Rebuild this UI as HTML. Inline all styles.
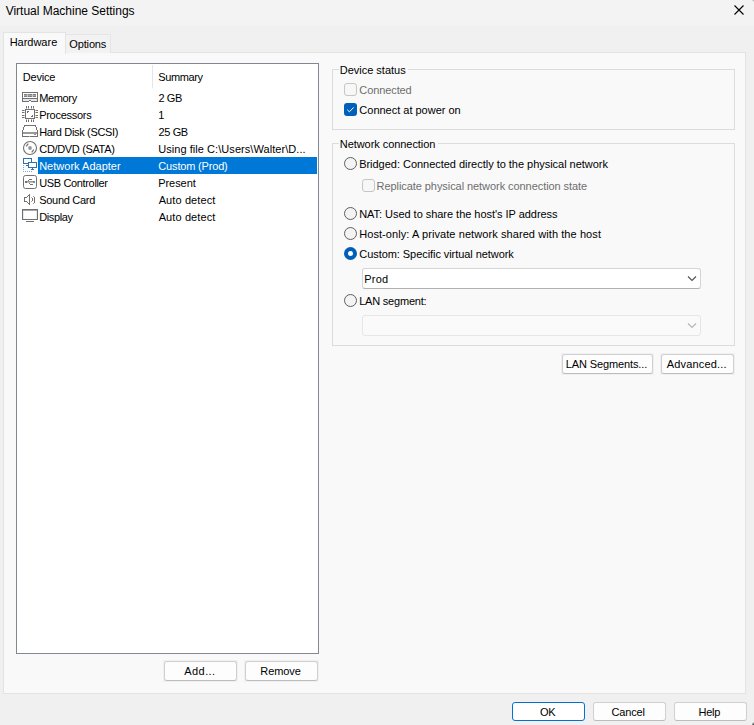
<!DOCTYPE html>
<html><head><meta charset="utf-8"><style>
html,body{margin:0;padding:0;}
body{width:754px;height:725px;overflow:hidden;position:relative;background:#f0f0f0;font-family:"Liberation Sans",sans-serif;font-size:11px;color:#000;}
.a{position:absolute;}
.t{position:absolute;white-space:pre;line-height:13px;height:13px;}
.btn{position:absolute;box-sizing:border-box;background:#fdfdfd;border:1px solid #d0d0d0;border-bottom-color:#bcbcbc;border-radius:3px;}
.bo{position:absolute;background:#f0f0f0;}
.cb{position:absolute;box-sizing:border-box;width:13px;height:13px;border-radius:3px;}
.cbd{border:1px solid #c6c6c6;background:#f7f7f7;}
.rd{position:absolute;box-sizing:border-box;width:13px;height:13px;border-radius:50%;border:1px solid #5f5f5f;background:#f3f3f3;}
.grp{position:absolute;box-sizing:border-box;border:1px solid #dcdcdc;}
.gl{position:absolute;background:#f9f9f9;height:3px;}
</style></head><body>
<div class="a" style="left:0;top:0;width:754px;height:26px;background:#f3f3f3;"></div>
<div class="t" style="left:5.67px;top:4px;font-size:12px;letter-spacing:-0.01px;line-height:14px;">Virtual Machine Settings</div>
<svg class="a" style="left:734px;top:5px" width="10" height="10" viewBox="0 0 10 10"><path d="M0.5 0.5L9.5 9.5M9.5 0.5L0.5 9.5" stroke="#000" stroke-width="1.1"/></svg>
<div class="a" style="left:752px;top:-2px;width:4px;height:5px;border-radius:50%;background:radial-gradient(circle at 100% 0%, #707070 0%, #909090 40%, rgba(243,243,243,0) 75%);"></div>
<div class="a" style="left:752px;top:721px;width:4px;height:6px;background:radial-gradient(circle at 100% 100%, #202020 0%, #404040 45%, rgba(240,240,240,0) 80%);"></div>
<div class="a" style="left:3px;top:52px;width:741px;height:640px;background:#f9f9f9;border:1px solid #e3e3e3;"></div>
<div class="a" style="left:65px;top:34px;width:44px;height:18px;background:#f2f2f2;border:1px solid #e5e5e5;border-bottom:none;"></div>
<div class="a" style="left:3px;top:32px;width:61px;height:21px;background:#f9f9f9;border:1px solid #e3e3e3;border-bottom:none;"></div>
<div class="t" style="left:9.67px;top:36px;letter-spacing:-0.014px;">Hardware</div>
<div class="t" style="left:69.32px;top:38px;letter-spacing:-0.151px;">Options</div>
<div class="a" style="left:16px;top:63px;width:301px;height:589px;background:#fff;border:1px solid #828790;"></div>
<div class="a" style="left:152px;top:65px;width:1px;height:23px;background:#e5e5e5;"></div>
<div class="t" style="left:22.87px;top:71px;letter-spacing:-0.199px;">Device</div>
<div class="t" style="left:158.16px;top:71px;letter-spacing:-0.35px;">Summary</div>
<div class="a" style="left:38px;top:157px;width:279px;height:17px;background:#0078d7;"></div>
<div class="t" style="left:39.17px;top:92px;letter-spacing:-0.35px;">Memory</div>
<div class="t" style="left:39.17px;top:109px;letter-spacing:-0.273px;">Processors</div>
<div class="t" style="left:39.17px;top:126px;letter-spacing:-0.343px;">Hard Disk (SCSI)</div>
<div class="t" style="left:39.37px;top:143px;letter-spacing:-0.35px;">CD/DVD (SATA)</div>
<div class="t" style="left:39.17px;top:160px;letter-spacing:0.013px;color:#fff;">Network Adapter</div>
<div class="t" style="left:39.2px;top:177px;letter-spacing:-0.35px;">USB Controller</div>
<div class="t" style="left:39.26px;top:194px;letter-spacing:-0.297px;">Sound Card</div>
<div class="t" style="left:39.17px;top:211px;letter-spacing:-0.35px;">Display</div>
<div class="t" style="left:158.4px;top:92px;letter-spacing:-0.35px;">2 GB</div>
<div class="t" style="left:158.15px;top:109px;">1</div>
<div class="t" style="left:158.4px;top:126px;letter-spacing:-0.35px;">25 GB</div>
<div class="t" style="left:158.2px;top:143px;letter-spacing:0.057px;">Using file C:\Users\Walter\D...</div>
<div class="t" style="left:158.37px;top:160px;letter-spacing:-0.179px;color:#fff;">Custom (Prod)</div>
<div class="t" style="left:158.17px;top:177px;letter-spacing:-0.043px;">Present</div>
<div class="t" style="left:158.67px;top:194px;letter-spacing:0.11px;">Auto detect</div>
<div class="t" style="left:158.67px;top:211px;letter-spacing:0.11px;">Auto detect</div>
<svg class="a" style="left:20px;top:89px" width="20" height="136" viewBox="20 89 20 136" shape-rendering="crispEdges">
<rect x="23" y="99" width="14" height="2" fill="#e4e9ee"/>
<rect x="22" y="92" width="16" height="1" fill="#707070"/>
<rect x="22" y="93" width="1" height="9" fill="#707070"/>
<rect x="37" y="93" width="1" height="9" fill="#707070"/>
<rect x="22" y="101" width="7" height="1" fill="#707070"/>
<rect x="31" y="101" width="7" height="1" fill="#707070"/>
<rect x="29" y="100" width="2" height="1" fill="#707070"/>
<rect x="22" y="98" width="16" height="1" fill="#707070"/>
<rect x="24" y="94" width="12" height="1" fill="#808080"/>
<rect x="24" y="96" width="12" height="1" fill="#808080"/>
<rect x="24" y="95" width="12" height="1" fill="#a8a8a8"/>
<rect x="27" y="94" width="1" height="3" fill="#c8c8c8"/>
<rect x="32" y="94" width="1" height="3" fill="#c8c8c8"/>
<rect x="25" y="109" width="10" height="1" fill="#707070"/>
<rect x="25" y="118" width="10" height="1" fill="#707070"/>
<rect x="25" y="110" width="1" height="8" fill="#707070"/>
<rect x="34" y="110" width="1" height="8" fill="#707070"/>
<rect x="26" y="106" width="1" height="2" fill="#707070"/>
<rect x="26" y="120" width="1" height="2" fill="#707070"/>
<rect x="26" y="108" width="1" height="1" fill="#b8b8b8"/>
<rect x="26" y="119" width="1" height="1" fill="#b8b8b8"/>
<rect x="28" y="106" width="1" height="2" fill="#707070"/>
<rect x="28" y="120" width="1" height="2" fill="#707070"/>
<rect x="28" y="108" width="1" height="1" fill="#b8b8b8"/>
<rect x="28" y="119" width="1" height="1" fill="#b8b8b8"/>
<rect x="31" y="106" width="1" height="2" fill="#707070"/>
<rect x="31" y="120" width="1" height="2" fill="#707070"/>
<rect x="31" y="108" width="1" height="1" fill="#b8b8b8"/>
<rect x="31" y="119" width="1" height="1" fill="#b8b8b8"/>
<rect x="33" y="106" width="1" height="2" fill="#707070"/>
<rect x="33" y="120" width="1" height="2" fill="#707070"/>
<rect x="33" y="108" width="1" height="1" fill="#b8b8b8"/>
<rect x="33" y="119" width="1" height="1" fill="#b8b8b8"/>
<rect x="22" y="110" width="2" height="1" fill="#707070"/>
<rect x="36" y="110" width="2" height="1" fill="#707070"/>
<rect x="24" y="110" width="1" height="1" fill="#b8b8b8"/>
<rect x="35" y="110" width="1" height="1" fill="#b8b8b8"/>
<rect x="22" y="112" width="2" height="1" fill="#707070"/>
<rect x="36" y="112" width="2" height="1" fill="#707070"/>
<rect x="24" y="112" width="1" height="1" fill="#b8b8b8"/>
<rect x="35" y="112" width="1" height="1" fill="#b8b8b8"/>
<rect x="22" y="115" width="2" height="1" fill="#707070"/>
<rect x="36" y="115" width="2" height="1" fill="#707070"/>
<rect x="24" y="115" width="1" height="1" fill="#b8b8b8"/>
<rect x="35" y="115" width="1" height="1" fill="#b8b8b8"/>
<rect x="22" y="117" width="2" height="1" fill="#707070"/>
<rect x="36" y="117" width="2" height="1" fill="#707070"/>
<rect x="24" y="117" width="1" height="1" fill="#b8b8b8"/>
<rect x="35" y="117" width="1" height="1" fill="#b8b8b8"/>
<rect x="27" y="111" width="2" height="1" fill="#707070"/>
<rect x="27" y="112" width="1" height="1" fill="#707070"/>
<rect x="32" y="115" width="1" height="1" fill="#707070"/>
<rect x="31" y="116" width="2" height="1" fill="#707070"/>
<rect x="24" y="125" width="12" height="1" fill="#707070"/>
<rect x="24" y="126" width="1" height="1" fill="#707070"/>
<rect x="23" y="127" width="1" height="3" fill="#707070"/>
<rect x="22" y="130" width="1" height="7" fill="#707070"/>
<rect x="35" y="126" width="1" height="1" fill="#707070"/>
<rect x="36" y="127" width="1" height="3" fill="#707070"/>
<rect x="37" y="130" width="1" height="7" fill="#707070"/>
<rect x="23" y="132" width="14" height="2" fill="#9a9a9a"/>
<rect x="22" y="136" width="7" height="1" fill="#707070"/>
<rect x="30" y="136" width="8" height="1" fill="#707070"/>
<rect x="29" y="136" width="1" height="1" fill="#b0b0b0"/>
<rect x="34" y="134" width="2" height="1" fill="#909090"/>
<rect x="24" y="197" width="3" height="1" fill="#707070"/>
<rect x="24" y="201" width="3" height="1" fill="#707070"/>
<rect x="24" y="198" width="1" height="3" fill="#707070"/>
<rect x="29" y="194" width="1" height="11" fill="#707070"/>
<rect x="28" y="195" width="1" height="1" fill="#707070"/>
<rect x="27" y="196" width="1" height="1" fill="#707070"/>
<rect x="28" y="203" width="1" height="1" fill="#707070"/>
<rect x="27" y="202" width="1" height="1" fill="#707070"/>
<rect x="32" y="198" width="1" height="3" fill="#707070"/>
<rect x="31" y="197" width="1" height="1" fill="#b0b0b0"/>
<rect x="31" y="201" width="1" height="1" fill="#b0b0b0"/>
<rect x="34" y="197" width="1" height="6" fill="#707070"/>
<rect x="33" y="196" width="1" height="1" fill="#909090"/>
<rect x="33" y="203" width="1" height="1" fill="#909090"/>
<rect x="22" y="209" width="16" height="1" fill="#707070"/><rect x="23" y="210" width="14" height="1" fill="#a8a8a8"/>
<rect x="22" y="210" width="1" height="10" fill="#707070"/>
<rect x="37" y="210" width="1" height="10" fill="#707070"/>
<rect x="22" y="219" width="16" height="1" fill="#707070"/>
<rect x="23" y="211" width="1" height="8" fill="#e6ebf0"/>
<rect x="36" y="211" width="1" height="8" fill="#e6ebf0"/>
<rect x="26" y="221" width="8" height="1" fill="#707070"/>
<rect x="25" y="181" width="2" height="2" fill="#707070"/>
<rect x="33" y="181" width="2" height="2" fill="#6f8fb0"/>
<rect x="27" y="181" width="6" height="1" fill="#9a9a9a"/>
<rect x="27" y="182" width="6" height="1" fill="#c0c0c0"/>
<rect x="28" y="180" width="1" height="1" fill="#707070"/>
<rect x="29" y="179" width="3" height="1" fill="#707070"/>
<rect x="29" y="183" width="1" height="1" fill="#707070"/>
<rect x="30" y="184" width="3" height="1" fill="#707070"/>
<rect x="23" y="158" width="9" height="1" fill="#3070ac"/>
<rect x="23" y="163" width="5" height="1" fill="#3070ac"/>
<rect x="23" y="159" width="1" height="4" fill="#3070ac"/>
<rect x="31" y="159" width="1" height="3" fill="#3070ac"/>
<rect x="28" y="162" width="9" height="1" fill="#3070ac"/>
<rect x="28" y="167" width="9" height="1" fill="#3070ac"/>
<rect x="28" y="163" width="1" height="4" fill="#3070ac"/>
<rect x="36" y="163" width="1" height="4" fill="#3070ac"/>
<rect x="29" y="163" width="7" height="4" fill="#ffffff"/>
<rect x="32" y="168" width="1" height="1" fill="#3070ac"/>
<rect x="31" y="169" width="3" height="1" fill="#3070ac"/>
<rect x="26" y="165" width="2" height="1" fill="#3070ac"/>
<rect x="23" y="165" width="1" height="1" fill="#7aaadc"/>
<rect x="23" y="167" width="1" height="1" fill="#7aaadc"/>
<rect x="23" y="169" width="1" height="1" fill="#7aaadc"/>
<rect x="23" y="171" width="1" height="1" fill="#7aaadc"/>
<rect x="25" y="171" width="1" height="1" fill="#7aaadc"/>
<rect x="27" y="171" width="1" height="1" fill="#7aaadc"/>
<rect x="29" y="171" width="1" height="1" fill="#7aaadc"/>
<rect x="31" y="171" width="1" height="1" fill="#7aaadc"/>
<g shape-rendering="auto"><circle cx="30" cy="148" r="6.5" fill="none" stroke="#707070" stroke-width="1.1"/><circle cx="30" cy="148" r="1.9" fill="#999"/><path d="M26.2 146.3L28.3 143.6M33.8 149.7L31.7 152.4" stroke="#707070" stroke-width="1.2" fill="none"/><rect x="23.5" y="175.5" width="13" height="13" rx="2" fill="none" stroke="#707070" stroke-width="1"/></g>
</svg>
<div class="bo" style="left:163px;top:660px;width:75px;height:22px;"></div><div class="btn" style="left:164px;top:661px;width:73px;height:20px;"></div>
<div class="bo" style="left:244px;top:660px;width:75px;height:22px;"></div><div class="btn" style="left:245px;top:661px;width:73px;height:20px;"></div>
<div class="t" style="left:184.37px;top:665px;letter-spacing:0.4px;">Add...</div>
<div class="t" style="left:260.37px;top:665px;letter-spacing:-0.098px;">Remove</div>
<div class="grp" style="left:332px;top:69px;width:403px;height:61px;"></div>
<div class="gl" style="left:339px;top:68px;width:69px;"></div>
<div class="t" style="left:339.77px;top:64px;letter-spacing:-0.013px;">Device status</div>
<div class="cb cbd" style="left:344px;top:83px;"></div>
<div class="t" style="left:359.37px;top:84px;letter-spacing:-0.104px;color:#6e6e6e;">Connected</div>
<div class="cb" style="left:344px;top:103px;background:#005fb8;"></div>
<svg class="a" style="left:344px;top:103px" width="13" height="13" viewBox="0 0 13 13"><path d="M3.3 6.8L5.4 8.8L9.7 4.4" fill="none" stroke="#fff" stroke-width="1"/></svg>
<div class="t" style="left:359.37px;top:104px;letter-spacing:-0.011px;">Connect at power on</div>
<div class="grp" style="left:332px;top:143px;width:403px;height:203px;"></div>
<div class="gl" style="left:339px;top:142px;width:99px;"></div>
<div class="t" style="left:339.77px;top:138px;letter-spacing:-0.058px;">Network connection</div>
<div class="rd" style="left:344px;top:157px;"></div>
<div class="t" style="left:359.17px;top:158px;letter-spacing:-0.025px;">Bridged: Connected directly to the physical network</div>
<div class="cb cbd" style="left:362px;top:179px;"></div>
<div class="t" style="left:376.57px;top:180px;letter-spacing:-0.066px;color:#6e6e6e;">Replicate physical network connection state</div>
<div class="rd" style="left:344px;top:207px;"></div>
<div class="t" style="left:359.17px;top:208px;letter-spacing:-0.035px;">NAT: Used to share the host's IP address</div>
<div class="rd" style="left:344px;top:227px;"></div>
<div class="t" style="left:359.17px;top:228px;letter-spacing:0.082px;">Host-only: A private network shared with the host</div>
<div class="rd" style="left:344px;top:247px;border:none;background:#005fb8;"></div>
<div class="a" style="left:348px;top:251px;width:5px;height:5px;border-radius:50%;background:#fff;"></div>
<div class="t" style="left:359.37px;top:248px;letter-spacing:-0.067px;">Custom: Specific virtual network</div>
<div class="a" style="left:362px;top:268px;width:337px;height:19px;background:#fff;border:1px solid #d5d5d5;border-bottom-color:#b0b0b0;border-radius:3px;"></div>
<div class="t" style="left:364.17px;top:273px;letter-spacing:0.256px;">Prod</div>
<svg class="a" style="left:687px;top:275px" width="10" height="7" viewBox="0 0 10 7"><path d="M1 1.5L5 5.5L9 1.5" fill="none" stroke="#505050" stroke-width="1.1"/></svg>
<div class="rd" style="left:344px;top:294px;"></div>
<div class="t" style="left:359.17px;top:295px;letter-spacing:-0.204px;">LAN segment:</div>
<div class="a" style="left:362px;top:315px;width:337px;height:19px;background:#fafafa;border:1px solid #e6e6e6;border-radius:3px;"></div>
<svg class="a" style="left:687px;top:322px" width="10" height="7" viewBox="0 0 10 7"><path d="M1 1.5L5 5.5L9 1.5" fill="none" stroke="#b5b5b5" stroke-width="1.1"/></svg>
<div class="bo" style="left:561px;top:353px;width:93px;height:22px;"></div><div class="btn" style="left:562px;top:354px;width:91px;height:20px;"></div>
<div class="bo" style="left:660px;top:353px;width:75px;height:22px;"></div><div class="btn" style="left:661px;top:354px;width:73px;height:20px;"></div>
<div class="t" style="left:565.87px;top:358px;letter-spacing:-0.125px;">LAN Segments...</div>
<div class="t" style="left:666.67px;top:358px;letter-spacing:0.174px;">Advanced...</div>
<div class="btn" style="left:512px;top:702px;width:73px;height:19px;border:1px solid #0571cf;background:#fff;"></div>
<div class="btn" style="left:593px;top:702px;width:73px;height:19px;"></div>
<div class="btn" style="left:674px;top:702px;width:73px;height:19px;"></div>
<div class="t" style="left:540.12px;top:706px;letter-spacing:-0.35px;">OK</div>
<div class="t" style="left:611.57px;top:706px;letter-spacing:-0.158px;">Cancel</div>
<div class="t" style="left:698.47px;top:706px;letter-spacing:-0.239px;">Help</div>
</body></html>
